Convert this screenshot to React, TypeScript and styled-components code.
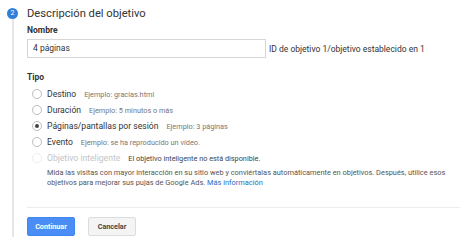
import styled, { createGlobalStyle } from "styled-components";

const Global = createGlobalStyle`
  body {
    margin: 0;
    background: #ffffff;
    font-family: Roboto, "Liberation Sans", Arial, sans-serif;
    color: #333;
  }
`;

const Page = styled.div`
  display: grid;
  grid-template-columns: 27px 1fr;
  width: 460px;
  height: 243px;
  overflow: hidden;
`;

const Rail = styled.div`
  display: flex;
  flex-direction: column;
  align-items: center;
  padding: 8px 2px 6px 0;
`;

const StepDot = styled.div`
  width: 11px;
  height: 11px;
  border-radius: 50%;
  background: #2f7ed8;
  color: #fff;
  font-size: 7px;
  line-height: 11px;
  text-align: center;
  flex-shrink: 0;
`;

const RailLine = styled.div`
  width: 2px;
  flex: 1;
  background: #e6e6e6;
`;

const Content = styled.div`
  display: flex;
  flex-direction: column;
  padding-top: 7px;
`;

const Heading = styled.h2`
  margin: 0;
  font-size: 11.2px;
  font-weight: 400;
  color: #333;
  line-height: 14px;
`;

const FieldLabel = styled.div`
  margin-top: 4px;
  font-size: 8.5px;
  font-weight: 700;
  color: #333;
  line-height: 11px;
`;

const FieldRow = styled.div`
  display: flex;
  align-items: center;
  gap: 3px;
  margin-top: 3px;
`;

const TextInput = styled.div`
  box-sizing: border-box;
  width: 239px;
  height: 19px;
  border: 1px solid #d6d6d6;
  padding: 0 5px;
  font-size: 8.5px;
  line-height: 17px;
  color: #333;
`;

const Hint = styled.span`
  font-size: 8.5px;
  color: #333;
  white-space: nowrap;
`;

const SectionLabel = styled(FieldLabel)`
  margin-top: 14px;
`;

const Options = styled.div`
  display: flex;
  flex-direction: column;
  padding-left: 5px;
  margin-top: 3px;
`;

const Option = styled.div`
  display: flex;
  align-items: center;
  height: 16px;
  white-space: nowrap;
`;

const Radio = styled.span<{ $checked?: boolean; $disabled?: boolean }>`
  box-sizing: border-box;
  width: 10px;
  height: 10px;
  border-radius: 50%;
  border: 1px solid ${({ $disabled }) => ($disabled ? "#eeeeee" : "#bdbdbd")};
  display: flex;
  align-items: center;
  justify-content: center;
  margin-right: 5px;
  flex-shrink: 0;

  &::after {
    content: "";
    display: ${({ $checked }) => ($checked ? "block" : "none")};
    width: 4px;
    height: 4px;
    border-radius: 50%;
    background: #444;
  }
`;

const OptionName = styled.span<{ $disabled?: boolean }>`
  font-size: 8.6px;
  color: ${({ $disabled }) => ($disabled ? "#c4c4c4" : "#333")};
  margin-right: 8px;
`;

const OptionExample = styled.span<{ $dark?: boolean }>`
  font-size: 7.3px;
  color: ${({ $dark }) => ($dark ? "#444" : "#777")};
`;

const Description = styled.p`
  margin: 2px 14px 0 15px;
  font-size: 7.4px;
  line-height: 10px;
  color: #555;
`;

const Link = styled.a`
  color: #2a6dc0;
  text-decoration: none;
`;

const Divider = styled.div`
  margin-top: 19px;
  height: 1px;
  background: #ececec;
`;

const Actions = styled.div`
  display: flex;
  gap: 13px;
  margin-top: 9px;
`;

const Button = styled.button<{ $primary?: boolean }>`
  box-sizing: border-box;
  width: 48px;
  height: 19px;
  padding: 0;
  border-radius: 2px;
  font-family: Roboto, "Liberation Sans", Arial, sans-serif;
  font-size: 7.2px;
  font-weight: 700;
  border: 1px solid ${({ $primary }) => ($primary ? "#3f86f3" : "#dcdcdc")};
  background: ${({ $primary }) => ($primary ? "#4a8ef5" : "#f4f4f4")};
  color: ${({ $primary }) => ($primary ? "#ffffff" : "#444")};
`;

const options = [
  { name: "Destino", example: "Ejemplo: gracias.html" },
  { name: "Duración", example: "Ejemplo: 5 minutos o más" },
  { name: "Páginas/pantallas por sesión", example: "Ejemplo: 3 páginas", checked: true },
  { name: "Evento", example: "Ejemplo: se ha reproducido un vídeo." },
];

export default function App() {
  return (
    <>
      <Global />
      <Page>
        <Rail>
          <StepDot>2</StepDot>
          <RailLine />
        </Rail>
        <Content>
          <Heading>Descripción del objetivo</Heading>
          <FieldLabel>Nombre</FieldLabel>
          <FieldRow>
            <TextInput>4 páginas</TextInput>
            <Hint>ID de objetivo 1/objetivo establecido en 1</Hint>
          </FieldRow>
          <SectionLabel>Tipo</SectionLabel>
          <Options>
            {options.map((o) => (
              <Option key={o.name}>
                <Radio $checked={o.checked} />
                <OptionName>{o.name}</OptionName>
                <OptionExample>{o.example}</OptionExample>
              </Option>
            ))}
            <Option>
              <Radio $disabled />
              <OptionName $disabled>Objetivo inteligente</OptionName>
              <OptionExample $dark>
                El objetivo inteligente no está disponible.
              </OptionExample>
            </Option>
            <Description>
              Mida las visitas con mayor interacción en su sitio web y
              conviértalas automáticamente en objetivos. Después, utilice esos
              objetivos para mejorar sus pujas de Google Ads.{" "}
              <Link href="#">Más información</Link>
            </Description>
          </Options>
          <Divider />
          <Actions>
            <Button $primary>Continuar</Button>
            <Button>Cancelar</Button>
          </Actions>
        </Content>
      </Page>
    </>
  );
}
